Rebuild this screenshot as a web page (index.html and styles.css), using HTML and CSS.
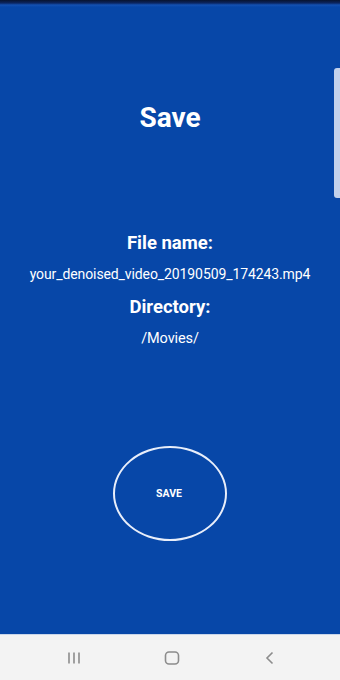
FILE: index.html
```html
<!DOCTYPE html>
<html>
<head>
<meta charset="utf-8">
<link rel="stylesheet" href="styles.css">
</head>
<body>
<div class="phone">
  <main class="screen">
    <div class="status"></div>
    <h1 class="title">Save</h1>
    <h2 class="label label-first">File name:</h2>
    <p class="value value-file">your_denoised_video_20190509_174243.mp4</p>
    <h2 class="label label-dir">Directory:</h2>
    <p class="value value-dir">/Movies/</p>
    <button class="save-btn">SAVE</button>
    <div class="scrollbar"></div>
  </main>
  <nav class="navbar">
    <svg class="nav-icon" width="16" height="16" viewBox="0 0 16 16"><path d="M3 2.5v11M8 2.5v11M13 2.5v11" stroke="#8c8c8c" stroke-width="1.6" fill="none"/></svg>
    <svg class="nav-icon" width="18" height="16" viewBox="0 0 18 16"><rect x="2.5" y="2" width="13" height="12" rx="3.5" stroke="#8c8c8c" stroke-width="1.6" fill="none"/></svg>
    <svg class="nav-icon" width="16" height="16" viewBox="0 0 16 16"><path d="M10.5 2.5L5 8l5.5 5.5" stroke="#8c8c8c" stroke-width="1.6" fill="none"/></svg>
  </nav>
</div>
</body>
</html>
```
FILE: styles.css
```css
* { box-sizing: border-box; }
html, body { margin: 0; padding: 0; }
body {
  width: 340px;
  height: 680px;
  overflow: hidden;
  font-family: Roboto, "Liberation Sans", sans-serif;
}
.phone { display: flex; flex-direction: column; height: 680px; }
.screen {
  position: relative;
  height: 634px;
  background: #0747a8;
  display: flex;
  flex-direction: column;
  align-items: center;
  color: #fff;
}
.status {
  align-self: stretch;
  height: 7px;
  background: linear-gradient(#08142e 0px, #0b2560 3px, #1452b2 5px, #0747a8 7px);
}
.title {
  margin: 96px 0 0;
  font-size: 28px;
  line-height: 30px;
  font-weight: 700;
}
.label {
  margin: 0;
  font-size: 18.5px;
  line-height: 20px;
  font-weight: 700;
}
.label-first { margin-top: 100px; }
.label-dir { margin-top: 15px; }
.value {
  margin: 13px 0 0;
  font-size: 14px;
  line-height: 16px;
  letter-spacing: -0.1px;
}
.value-dir { margin-top: 14px; font-size: 14.5px; }
.save-btn {
  margin-top: 99px;
  width: 114px;
  height: 95px;
  border: 2px solid #e8eefa;
  border-radius: 50%;
  background: transparent;
  color: #fff;
  font-family: Roboto, "Liberation Sans", sans-serif;
  font-size: 10.5px;
  font-weight: 700;
  padding: 0 2px 0 0;
}
.scrollbar {
  position: absolute;
  right: 0;
  top: 68px;
  width: 6px;
  height: 130px;
  background: #c3d2ec;
  border-radius: 3px 0 0 3px;
}
.navbar {
  height: 46px;
  background: #f3f3f3;
  border-top: 1px solid #c9d6ea;
  display: flex;
  align-items: center;
  justify-content: space-between;
  padding: 0 62px 0 66px;
}
.nav-icon { display: block; }
```
